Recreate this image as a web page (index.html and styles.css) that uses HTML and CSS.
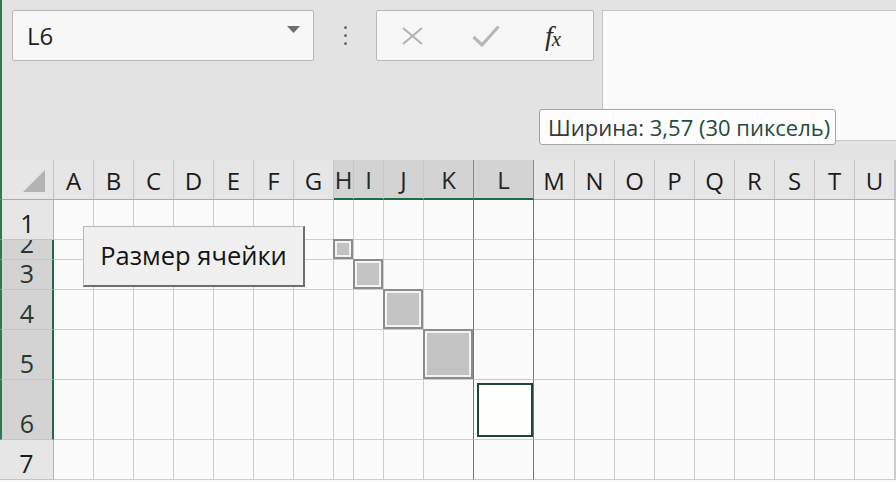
FILE: index.html
```html
<!DOCTYPE html>
<html lang="ru">
<head>
<meta charset="utf-8">
<title>Размер ячейки</title>
<link rel="stylesheet" href="styles.css">
</head>
<body>
<div class="app">
  <div class="top">
    <div class="namebox">
      <span class="ref">L6</span>
      <svg class="drop" width="13" height="8" viewBox="0 0 13 8"><polygon points="0,0 13,0 6.5,7" fill="#6e6e6e"/></svg>
    </div>
    <div class="dots"><span></span><span></span><span></span></div>
    <div class="fxbox">
      <svg class="ic" width="24" height="20" viewBox="0 0 24 20"><path d="M2 2 L21 18 M21 2 L2 18" stroke="#b2b2b2" stroke-width="2" fill="none"/></svg>
      <svg class="ic" width="28" height="22" viewBox="0 0 28 22"><path d="M1.5 12 L10 20 L26.5 1.5" stroke="#b8b8b8" stroke-width="3.2" fill="none" stroke-linejoin="round"/></svg>
      <span class="fx">f<span class="fxx">x</span></span>
    </div>
    <div class="formula"></div>
  </div>

  <div class="sheet">
    <div class="corner"><svg width="22" height="22" viewBox="0 0 22 22"><polygon points="22,0 22,22 0,22" fill="#b3b3b3"/></svg></div>
    <div class="ch">A</div><div class="ch">B</div><div class="ch">C</div><div class="ch">D</div><div class="ch">E</div><div class="ch">F</div><div class="ch">G</div>
    <div class="ch sel">H</div><div class="ch sel">I</div><div class="ch sel">J</div><div class="ch sel dkh">K</div><div class="ch sel dkh">L</div>
    <div class="ch">M</div><div class="ch">N</div><div class="ch">O</div><div class="ch">P</div><div class="ch">Q</div><div class="ch">R</div><div class="ch">S</div><div class="ch">T</div><div class="ch">U</div><div class="ch"></div>

    <div class="rh gl">1</div>
    <div class="c"></div><div class="c"></div><div class="c"></div><div class="c"></div><div class="c"></div><div class="c"></div><div class="c"></div>
    <div class="c"></div><div class="c"></div><div class="c"></div><div class="c dk"></div><div class="c dk"></div>
    <div class="c"></div><div class="c"></div><div class="c"></div><div class="c"></div><div class="c"></div><div class="c"></div><div class="c"></div><div class="c"></div><div class="c"></div><div class="c"></div>

    <div class="rh gl sel">2</div>
    <div class="c"></div><div class="c"></div><div class="c"></div><div class="c"></div><div class="c"></div><div class="c"></div><div class="c"></div>
    <div class="c"><div class="shape s1"></div></div><div class="c"></div><div class="c"></div><div class="c dk"></div><div class="c dk"></div>
    <div class="c"></div><div class="c"></div><div class="c"></div><div class="c"></div><div class="c"></div><div class="c"></div><div class="c"></div><div class="c"></div><div class="c"></div><div class="c"></div>

    <div class="rh gl sel">3</div>
    <div class="c"></div><div class="c"></div><div class="c"></div><div class="c"></div><div class="c"></div><div class="c"></div><div class="c"></div>
    <div class="c"></div><div class="c"><div class="shape"></div></div><div class="c"></div><div class="c dk"></div><div class="c dk"></div>
    <div class="c"></div><div class="c"></div><div class="c"></div><div class="c"></div><div class="c"></div><div class="c"></div><div class="c"></div><div class="c"></div><div class="c"></div><div class="c"></div>

    <div class="rh gl sel">4</div>
    <div class="c"></div><div class="c"></div><div class="c"></div><div class="c"></div><div class="c"></div><div class="c"></div><div class="c"></div>
    <div class="c"></div><div class="c"></div><div class="c"><div class="shape"></div></div><div class="c dk"></div><div class="c dk"></div>
    <div class="c"></div><div class="c"></div><div class="c"></div><div class="c"></div><div class="c"></div><div class="c"></div><div class="c"></div><div class="c"></div><div class="c"></div><div class="c"></div>

    <div class="rh gl sel">5</div>
    <div class="c"></div><div class="c"></div><div class="c"></div><div class="c"></div><div class="c"></div><div class="c"></div><div class="c"></div>
    <div class="c"></div><div class="c"></div><div class="c"></div><div class="c dk"><div class="shape"></div></div><div class="c dk"></div>
    <div class="c"></div><div class="c"></div><div class="c"></div><div class="c"></div><div class="c"></div><div class="c"></div><div class="c"></div><div class="c"></div><div class="c"></div><div class="c"></div>

    <div class="rh gl sel">6</div>
    <div class="c"></div><div class="c"></div><div class="c"></div><div class="c"></div><div class="c"></div><div class="c"></div><div class="c"></div>
    <div class="c"></div><div class="c"></div><div class="c"></div><div class="c dk"></div><div class="c dk"><div class="active"></div></div>
    <div class="c"></div><div class="c"></div><div class="c"></div><div class="c"></div><div class="c"></div><div class="c"></div><div class="c"></div><div class="c"></div><div class="c"></div><div class="c"></div>

    <div class="rh">7</div>
    <div class="c"></div><div class="c"></div><div class="c"></div><div class="c"></div><div class="c"></div><div class="c"></div><div class="c"></div>
    <div class="c"></div><div class="c"></div><div class="c"></div><div class="c dk"></div><div class="c dk"></div>
    <div class="c"></div><div class="c"></div><div class="c"></div><div class="c"></div><div class="c"></div><div class="c"></div><div class="c"></div><div class="c"></div><div class="c"></div><div class="c"></div>
  </div>

  <div class="tooltip">Ширина: <span class="val">3,57 (30 пиксель)</span></div>
  <div class="button">Размер ячейки</div>
</div>
</body>
</html>
```
FILE: styles.css
```css
* { box-sizing: border-box; }
html, body { margin: 0; padding: 0; }
body {
  width: 896px;
  height: 482px;
  overflow: hidden;
  background: #fbfbfb;
  font-family: "Open Sans", "Noto Sans", sans-serif;
  color: #222;
}
.app { position: relative; width: 896px; height: 482px; overflow: hidden; }

.top {
  height: 160px;
  background: #e3e3e3;
  border-left: 2px solid #2a7a52;
  display: flex;
  align-items: flex-start;
  padding: 10px 0 0 10px;
}
.namebox {
  width: 302px;
  height: 51px;
  background: #f7f7f7;
  border: 1px solid #b9b9b9;
  border-radius: 2px;
  display: flex;
  align-items: center;
  justify-content: space-between;
  padding: 0 13px 0 14px;
}
.ref { font-size: 24px; line-height: 1; color: #1e1e1e; margin-top: 1px; }
.drop { margin-top: -12px; }
.dots {
  width: 62px;
  height: 51px;
  display: flex;
  flex-direction: column;
  align-items: center;
  justify-content: center;
  gap: 5px;
}
.dots span { width: 3px; height: 3px; border-radius: 50%; background: #6c6c6c; }
.fxbox {
  width: 218px;
  height: 51px;
  background: #f7f7f7;
  border: 1px solid #b9b9b9;
  border-radius: 2px;
  display: flex;
  align-items: center;
  padding: 0 0 0 24px;
  gap: 49px;
}
.fxbox .ic:nth-child(2) { margin-left: -2px; }
.fx {
  font-family: "Liberation Serif", "DejaVu Serif", serif;
  font-style: italic;
  font-size: 28px;
  color: #2a2a2a;
  line-height: 1;
  margin-left: -4px;
  letter-spacing: -1px;
}
.fxx { font-size: 21px; position: relative; top: 1px; }
.formula {
  margin-left: 8px;
  flex: 1;
  height: 131px;
  background: #fafafa;
  border: 1px solid #c6c6c6;
  border-right: 0;
}

.sheet {
  display: grid;
  grid-template-columns: 54px repeat(7, 40px) 20px 30px 40px 50px 60px 41px repeat(8, 40px) 1fr;
  grid-template-rows: 40px 40px 20px 30px 40px 50px 60px 40px;
}
.corner {
  background: #e6e6e6;
  border-left: 2px solid #2a7a52;
  border-right: 1px solid #c4c4c4;
  border-bottom: 1px solid #ababab;
  display: flex;
  align-items: flex-end;
  justify-content: flex-end;
  padding: 0 8px 7px 0;
}
.ch {
  background: #e6e6e6;
  border-right: 1px solid #c6c6c6;
  border-bottom: 1px solid #ababab;
  font-size: 24px;
  line-height: 1;
  display: flex;
  align-items: center;
  justify-content: center;
  overflow: hidden;
  color: #1c1c1c;
  padding-top: 2px;
}
.ch.sel {
  background: #d3d3d3;
  border-bottom: 2px solid #1f6b45;
  color: #262626;
}
.ch.dkh { border-right-color: #8a8a8a; }
.rh {
  background: #e6e6e6;
  border-right: 1px solid #b4b4b4;
  border-bottom: 1px solid #c6c6c6;
  font-size: 25px;
  line-height: 30px;
  display: flex;
  align-items: flex-end;
  justify-content: center;
  overflow: hidden;
  padding-bottom: 1px;
  color: #1c1c1c;
}
.rh.gl { border-left: 2px solid #2a7a52; }
.rh.sel {
  background: #d3d3d3;
  border-right: 2px solid #1f6b45;
  color: #293731;
}
.c {
  background: #fbfbfb;
  border-right: 1px solid #cdcdcd;
  border-bottom: 1px solid #cdcdcd;
  display: flex;
  min-width: 0;
}
.c.dk { border-right-color: #767676; }
.shape {
  flex: 1;
  margin: -1px 0 0 -1px;
  border: 2px solid #8c8c8c;
  background: #c3c3c3;
  box-shadow: inset 0 0 0 2px #f4f4f4;
}
.active {
  flex: 1;
  margin: 3px 0 2px 3px;
  border: 2px solid #1f4634;
  background: #fdfffd;
}

.tooltip {
  position: absolute;
  left: 539px;
  top: 109px;
  width: 297px;
  height: 36px;
  background: #fdfdfd;
  border: 1px solid #a4a4a4;
  border-radius: 3px;
  font-size: 22px;
  line-height: 34px;
  padding-left: 8px;
  color: #383838;
  white-space: nowrap;
  overflow: hidden;
}
.tooltip .val { color: #234c3c; }
.button {
  position: absolute;
  left: 83px;
  top: 226px;
  width: 222px;
  height: 61px;
  background: #f0f0f0;
  border: 1px solid #b8b8b8;
  border-right: 2px solid #6f6f6f;
  border-bottom: 2px solid #6f6f6f;
  font-size: 25.5px;
  display: flex;
  align-items: center;
  justify-content: center;
  color: #151515;
  padding-bottom: 2px;
  white-space: nowrap;
}
```
